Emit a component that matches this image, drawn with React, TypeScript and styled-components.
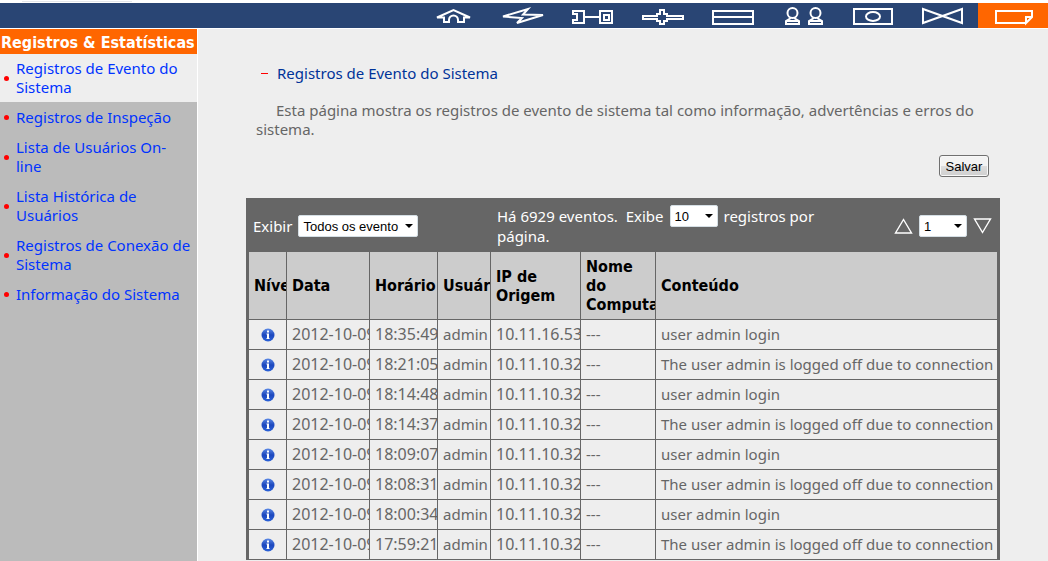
import React from 'react';
import styled, { createGlobalStyle } from 'styled-components';

const GlobalStyle = createGlobalStyle`
  * { box-sizing: border-box; }
  html, body, #root { height: 100%; }
  body {
    margin: 0;
    overflow: hidden;
    background: #eee;
    color: #666;
    font: 15px/19px "Noto Sans", "DejaVu Sans", sans-serif;
  }
`;

const Page = styled.div`
  display: flex;
  flex-direction: column;
  height: 100%;
`;

const TopEdge = styled.div`
  flex: none;
  height: 3px;
  padding: 1px 0 0 22px;
  background: #fff;
  &::before {
    content: '';
    display: block;
    width: 110px;
    height: 1px;
    background: #e4e6ea;
  }
`;

const NavBar = styled.nav`
  flex: none;
  display: flex;
  justify-content: flex-end;
  height: 26px;
  background: #294574;
  border-bottom: 1px solid #fff;
`;

const NavTab = styled.a<{ $active?: boolean }>`
  display: block;
  width: 70px;
  height: 25px;
  background: ${(p) => (p.$active ? '#f60' : 'transparent')};
  svg {
    display: block;
    fill: none;
    stroke: #fff;
    stroke-width: 2;
  }
`;

const Body = styled.div`
  flex: 1;
  min-height: 0;
  display: flex;
`;

const Sidebar = styled.aside`
  flex: none;
  width: 198px;
  background: #bbb;
  border-right: 1px solid #fff;
`;

const SidebarTitle = styled.h2`
  margin: 0;
  padding: 4px 0 2px 1px;
  background: #f60;
  color: #fff;
  font: bold 16px/19px "DejaVu Sans Condensed", "DejaVu Sans", sans-serif;
  font-stretch: condensed;
  white-space: nowrap;
`;

const Menu = styled.ul`
  margin: 0;
  padding: 0;
  list-style: none;
`;

const MenuItem = styled.li<{ $active?: boolean }>`
  display: flex;
  align-items: center;
  margin-bottom: 1px;
  padding: 5px 0 5px 4px;
  background: ${(p) => (p.$active ? '#eee' : 'transparent')};
  &::before {
    content: '';
    flex: none;
    width: 5px;
    height: 5px;
    margin-right: 7px;
    border-radius: 50%;
    background: #f00;
  }
`;

const MenuLink = styled.a`
  color: #03f;
  text-decoration: none;
  white-space: pre-line;
`;

const Main = styled.main`
  flex: 1;
  min-width: 0;
  padding: 35px 48px 0;
`;

const Intro = styled.section`
  padding: 0 10px;
`;

const Title = styled.h1`
  display: flex;
  align-items: center;
  gap: 9px;
  margin: 0 0 18px 5px;
  color: #039;
  font: inherit;
  &::before {
    content: '';
    width: 7px;
    height: 1px;
    background: #f00;
  }
`;

const Description = styled.p`
  margin: 0;
  text-indent: 20px;
`;

const Actions = styled.div`
  display: flex;
  justify-content: flex-end;
  padding: 16px 1px 21px;
`;

const SaveButton = styled.button`
  width: 50px;
  height: 22px;
  padding: 0;
  border: 1px solid #707070;
  border-radius: 3px;
  background: linear-gradient(#f3f3f3 0 50%, #ddd 50%, #cfcfcf);
  box-shadow: inset 0 0 0 1px #f8f8f8;
  color: #000;
  font: 13px "Liberation Sans", sans-serif;
`;

const Panel = styled.section`
  border: solid #666;
  border-width: 0 3px;
  background: #666;
`;

const Toolbar = styled.div`
  display: flex;
  align-items: center;
  height: 54px;
  padding: 2px 5px 0 4px;
  color: #fff;
`;

const ShowFilter = styled.div`
  flex: none;
  display: flex;
  align-items: center;
  gap: 6px;
  width: 244px;
`;

const Summary = styled.div`
  flex: none;
  width: 350px;
`;

const SummaryLine = styled.div`
  display: flex;
  align-items: center;
  gap: 6px;
  height: 20px;
`;

const Pager = styled.div`
  display: flex;
  align-items: center;
  gap: 6px;
  margin-left: auto;
`;

const PageButton = styled.button`
  display: block;
  width: 19px;
  height: 16px;
  padding: 0;
  border: 0;
  background: none;
  svg {
    display: block;
    fill: none;
    stroke: #fff;
    stroke-width: 1.4;
  }
`;

const SelectBox = styled.span<{ $width: number }>`
  position: relative;
  flex: none;
  width: ${(p) => p.$width}px;
  height: 22px;
  &::after {
    content: '';
    position: absolute;
    top: 9px;
    right: 5px;
    border: solid transparent;
    border-width: 4px 4px 0;
    border-top-color: #000;
    pointer-events: none;
  }
`;

const Select = styled.select`
  appearance: none;
  display: block;
  width: 100%;
  height: 22px;
  padding: 0 4px;
  border: 1px solid #d5dfe5;
  border-radius: 2px;
  background: #fff;
  color: #000;
  font: 13px "Liberation Sans", sans-serif;
`;

const Table = styled.table`
  width: 100%;
  table-layout: fixed;
  border-collapse: separate;
  border-spacing: 0;
`;

const Col = styled.col<{ $width?: number }>`
  width: ${(p) => (p.$width ? `${p.$width}px` : 'auto')};
`;

const HeadCell = styled.th`
  padding: 5px;
  overflow: hidden;
  border: solid #666;
  border-width: 0 1px 1px 0;
  background: #ccc;
  color: #000;
  font: bold 16px/19px "DejaVu Sans Condensed", "DejaVu Sans", sans-serif;
  font-stretch: condensed;
  text-align: left;
  &:last-child { border-right: 0; }
`;

const Cell = styled.td<{ $numeric?: boolean }>`
  height: 30px;
  padding: 5px;
  overflow: hidden;
  border: solid #666;
  border-width: 0 1px 1px 0;
  background: #eee;
  font-size: ${(p) => (p.$numeric ? 16 : 15)}px;
  vertical-align: middle;
  white-space: nowrap;
  &:last-child { border-right: 0; padding-right: 0; }
  svg { display: block; margin: 0 auto; }
`;

const navItems = [
  { label: 'Início', art: <path d="M19 14.5 35.5 7 52 14.5H46V19H40V17a4.5 4.5 0 0 0-9 0V19H26V14.5Z" /> },
  { label: 'Atalhos', art: <path d="M15 13.5 40 6 35 11.5 55 12 29 20 34 15Z" /> },
  {
    label: 'Acesso',
    art: (
      <>
        <path d="M15 8H26V20H15V17H19V11H15ZM26 14H42" />
        <path d="M42 8H54V20H42ZM46 12H51V17H46Z" />
      </>
    ),
  },
  { label: 'Rede', art: <path d="M15 13H29V11H32V7H36V11H39V13H55V16H39V18H36V21H32V18H29V16H15Z" /> },
  { label: 'Dispositivos', art: <path d="M15 8H55V21H15ZM15 14H55" /> },
  {
    label: 'Usuários',
    art: (
      <>
        <circle cx="24.5" cy="10" r="5" />
        <path d="M23 15 18 18V21H31V18L26 15M18 18H31" />
        <circle cx="47.5" cy="10" r="5" />
        <path d="M46 15 41 18V21H54V18L49 15M41 18H54" />
      </>
    ),
  },
  {
    label: 'Monitoramento',
    art: (
      <>
        <path d="M16 6H54V21H16Z" />
        <ellipse cx="35" cy="13.5" rx="7" ry="4.5" />
      </>
    ),
  },
  { label: 'Manutenção', art: <path d="M15 6 54 20V6L15 20Z" /> },
  { label: 'Registros', art: <path d="M47 20H18V8H54V14L48 20V14H54" /> },
];

const menuItems = [
  'Registros de Evento do Sistema',
  'Registros de Inspeção',
  'Lista de Usuários On-\nline',
  'Lista Histórica de Usuários',
  'Registros de Conexão de Sistema',
  'Informação do Sistema',
];

const columns = [
  { label: 'Nível', width: 38 },
  { label: 'Data', width: 83 },
  { label: 'Horário', width: 68 },
  { label: 'Usuário', width: 53 },
  { label: 'IP de Origem', width: 90 },
  { label: 'Nome do Computador', width: 75 },
  { label: 'Conteúdo' },
];

const LOGIN = 'user admin login';
const LOGOFF = 'The user admin is logged off due to connection';

const events = [
  { time: '18:35:49', ip: '10.11.16.53', content: LOGIN },
  { time: '18:21:05', ip: '10.11.10.32', content: LOGOFF },
  { time: '18:14:48', ip: '10.11.10.32', content: LOGIN },
  { time: '18:14:37', ip: '10.11.10.32', content: LOGOFF },
  { time: '18:09:07', ip: '10.11.10.32', content: LOGIN },
  { time: '18:08:31', ip: '10.11.10.32', content: LOGOFF },
  { time: '18:00:34', ip: '10.11.10.32', content: LOGIN },
  { time: '17:59:21', ip: '10.11.10.32', content: LOGOFF },
];

const InfoIcon = () => (
  <svg width="14" height="14" viewBox="0 0 14 14" role="img" aria-label="Informação">
    <defs>
      <linearGradient id="info" x1="0" y1="0" x2="0" y2="1">
        <stop offset="0" stopColor="#5c8ae6" />
        <stop offset="0.5" stopColor="#1c47bd" />
        <stop offset="1" stopColor="#2a62d8" />
      </linearGradient>
    </defs>
    <circle cx="7" cy="7" r="6.5" fill="url(#info)" />
    <path d="M6 2.5h2v2H6zM5.5 5.5H8v4.5h.5v1h-3v-1H6V6.5h-.5z" fill="#fff" />
  </svg>
);

function DropDown({ label, width, options }: { label: string; width: number; options: string[] }) {
  return (
    <SelectBox $width={width}>
      <Select aria-label={label}>
        {options.map((option) => (
          <option key={option}>{option}</option>
        ))}
      </Select>
    </SelectBox>
  );
}

export default function App() {
  return (
    <>
      <GlobalStyle />
      <Page>
        <TopEdge />
        <NavBar>
          {navItems.map(({ label, art }) => (
            <NavTab key={label} href="#" aria-label={label} $active={label === 'Registros'}>
              <svg width="70" height="25" viewBox="0 0 70 25">{art}</svg>
            </NavTab>
          ))}
        </NavBar>
        <Body>
          <Sidebar>
            <SidebarTitle>Registros &amp; Estatísticas</SidebarTitle>
            <Menu>
              {menuItems.map((item, index) => (
                <MenuItem key={item} $active={index === 0}>
                  <MenuLink href="#">{item}</MenuLink>
                </MenuItem>
              ))}
            </Menu>
          </Sidebar>
          <Main>
            <Intro>
              <Title>Registros de Evento do Sistema</Title>
              <Description>
                Esta página mostra os registros de evento de sistema tal como informação, advertências e erros do
                sistema.
              </Description>
              <Actions>
                <SaveButton type="button">Salvar</SaveButton>
              </Actions>
            </Intro>
            <Panel>
              <Toolbar>
                <ShowFilter>
                  Exibir
                  <DropDown label="Exibir" width={120} options={['Todos os evento']} />
                </ShowFilter>
                <Summary>
                  <SummaryLine>
                    <span>Há 6929 eventos.&nbsp; Exibe</span>
                    <DropDown label="Registros por página" width={48} options={['10', '20', '50']} />
                    <span>registros por</span>
                  </SummaryLine>
                  <SummaryLine>página.</SummaryLine>
                </Summary>
                <Pager>
                  <PageButton type="button" aria-label="Página anterior">
                    <svg width="19" height="16" viewBox="0 0 19 16"><path d="M9.5 1.5 17.5 15H1.5Z" /></svg>
                  </PageButton>
                  <DropDown label="Página" width={48} options={['1', '2', '3']} />
                  <PageButton type="button" aria-label="Próxima página">
                    <svg width="19" height="16" viewBox="0 0 19 16"><path d="M9.5 14.5 17.5 1H1.5Z" /></svg>
                  </PageButton>
                </Pager>
              </Toolbar>
              <Table>
                <colgroup>
                  {columns.map((column) => (
                    <Col key={column.label} $width={column.width} />
                  ))}
                </colgroup>
                <thead>
                  <tr>
                    {columns.map((column) => (
                      <HeadCell key={column.label} scope="col">{column.label}</HeadCell>
                    ))}
                  </tr>
                </thead>
                <tbody>
                  {events.map((event) => (
                    <tr key={event.time}>
                      <Cell><InfoIcon /></Cell>
                      <Cell $numeric>2012-10-09</Cell>
                      <Cell $numeric>{event.time}</Cell>
                      <Cell>admin</Cell>
                      <Cell $numeric>{event.ip}</Cell>
                      <Cell>---</Cell>
                      <Cell>{event.content}</Cell>
                    </tr>
                  ))}
                </tbody>
              </Table>
            </Panel>
          </Main>
        </Body>
      </Page>
    </>
  );
}
